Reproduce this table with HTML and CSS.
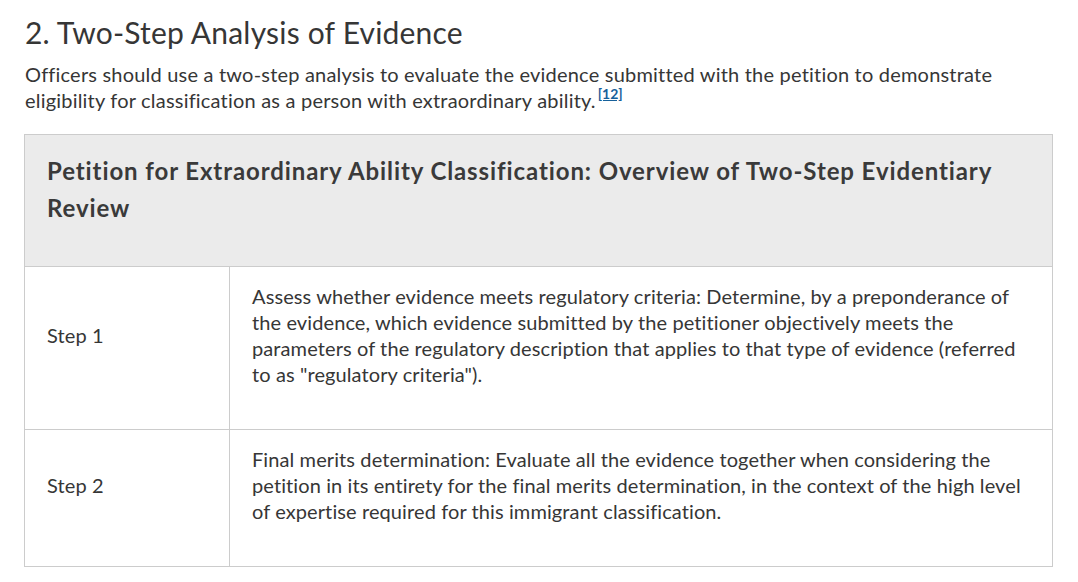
FILE: index.html
```html
<!DOCTYPE html>
<html lang="en">
<head>
<meta charset="utf-8">
<title>Two-Step Analysis of Evidence</title>
<link rel="stylesheet" href="styles.css">
</head>
<body>
<main class="page">
  <h2 class="section-title">2. Two-Step Analysis of Evidence</h2>
  <p class="intro">Officers should use a two-step analysis to evaluate the evidence submitted with the petition to demonstrate eligibility for classification as a person with extraordinary ability.<sup class="footnote"><a href="#fn12">[12]</a></sup></p>
  <table class="review-table">
    <thead>
      <tr>
        <th colspan="2" class="table-head"><p class="table-title">Petition for Extraordinary Ability Classification: Overview of Two-Step Evidentiary Review</p></th>
      </tr>
    </thead>
    <tbody>
      <tr>
        <td class="step-label"><p>Step 1</p></td>
        <td class="step-text"><p>Assess whether evidence meets regulatory criteria: Determine, by a preponderance of the evidence, which evidence submitted by the petitioner objectively meets the parameters of the regulatory description that applies to that type of evidence (referred to as "regulatory criteria").</p></td>
      </tr>
      <tr>
        <td class="step-label"><p>Step 2</p></td>
        <td class="step-text"><p>Final merits determination: Evaluate all the evidence together when considering the petition in its entirety for the final merits determination, in the context of the high level of expertise required for this immigrant classification.</p></td>
      </tr>
    </tbody>
  </table>
</main>
</body>
</html>
```
FILE: styles.css
```css
html, body {
  margin: 0;
  padding: 0;
  background: #ffffff;
}

body {
  font-family: "Lato", "Open Sans", sans-serif;
  color: #363636;
}

.page {
  width: 1029px;
  padding-left: 24px;
}

.section-title {
  margin: 14px 0 0 1px;
  font-size: 30px;
  line-height: 36px;
  font-weight: 400;
  letter-spacing: 0.2px;
}

.intro {
  margin: 11px 0 0 1px;
  font-size: 20px;
  line-height: 26px;
  letter-spacing: 0.2px;
}

.footnote {
  font-size: 14px;
  line-height: 1;
  vertical-align: 9px;
  margin-left: 2px;
  letter-spacing: 0;
}

.footnote a {
  color: #17609a;
  font-weight: 700;
  text-decoration: underline;
}

.review-table {
  width: 1029px;
  margin-top: 21px;
  border-collapse: collapse;
  border: 1px solid #cccccc;
  font-size: 20px;
  line-height: 26px;
  letter-spacing: 0.1px;
}

.table-head {
  background: #ebebeb;
  text-align: left;
  padding: 17px 22px 18px 22px;
  border: 1px solid #cccccc;
}

.table-title {
  margin: 0 0 22px 0;
  font-size: 24px;
  line-height: 37px;
  font-weight: 700;
  letter-spacing: 0.9px;
  color: #3a3a3a;
}

.review-table td {
  border: 1px solid #cccccc;
  padding: 16px 18px 16px 22px;
}

.review-table td p {
  margin: 0 0 26px 0;
}

.step-label {
  width: 164px;
  vertical-align: middle;
}

.step-text {
  vertical-align: top;
}
```
